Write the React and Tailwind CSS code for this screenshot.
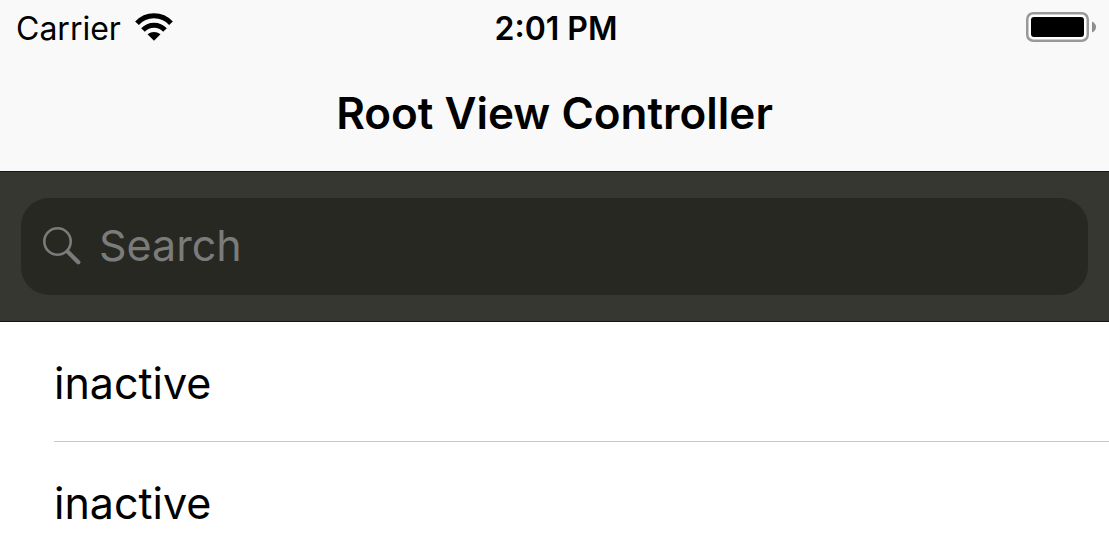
import { useState } from 'react';

const rows = [
    { id: 1, title: 'inactive' },
    { id: 2, title: 'inactive' },
];

function WifiIcon() {
    return (
        <svg className="w-[38px] h-7" viewBox="0 0 38 28" fill="none" stroke="black" strokeWidth="5" aria-hidden="true">
            <path d="M2 10.2A23 23 0 0 1 36 10.2" />
            <path d="M8 17A15 15 0 0 1 30 17" />
            <path d="M12.5 21.3Q19 16.5 25.5 21.3L19 27.7Z" fill="black" stroke="none" />
        </svg>
    );
}

function BatteryIcon() {
    return (
        <svg className="w-[70px] h-[30px]" viewBox="0 0 70 30" aria-hidden="true">
            <rect x="1.25" y="1.25" width="60.5" height="27.5" rx="6" fill="white" stroke="#999" strokeWidth="2.5" />
            <rect x="5" y="5" width="53" height="20" rx="3" fill="black" />
            <path d="M66 9.5Q70 11.5 70 15T66 20.5Z" fill="#8e8e8e" />
        </svg>
    );
}

function SearchIcon() {
    return (
        <svg className="w-[38px] h-[38px] shrink-0" viewBox="0 0 38 38" fill="none" stroke="#7b7b7b" aria-hidden="true">
            <circle cx="14.5" cy="14.5" r="13.2" strokeWidth="2.6" />
            <path d="M24.5 24.5L35.3 35.3" strokeWidth="4.2" strokeLinecap="round" />
        </svg>
    );
}

export default function App() {
    const [query, setQuery] = useState('');

    return (
        <div className="h-screen flex flex-col overflow-hidden bg-white text-black font-['Inter',sans-serif]">
            {/* Status bar + navigation bar */}
            <header className="shrink-0 bg-[#f9f9f9]">
                <div className="h-14 grid grid-cols-[1fr_auto_1fr] items-center pb-0.5 pl-4 pr-[13px] text-[32px] leading-none">
                    <div className="flex items-center gap-3.5">
                        <span className="pt-1">Carrier</span>
                        <WifiIcon />
                    </div>
                    <span className="pt-1 font-semibold">2:01 PM</span>
                    <div className="flex justify-end">
                        <BatteryIcon />
                    </div>
                </div>
                <div className="h-[115px] flex items-center justify-center pb-0.5">
                    <h1 className="text-[44px] leading-none font-semibold">Root View Controller</h1>
                </div>
            </header>

            {/* Search bar */}
            <div className="shrink-0 border-y border-[#161713] bg-[#363730] px-[21px] py-[26px]">
                <label className="h-[97px] flex items-center gap-[18px] rounded-[28px] bg-[#272822] px-[22px] pb-0.5">
                    <SearchIcon />
                    <input
                        type="text"
                        aria-label="Search"
                        placeholder="Search"
                        value={query}
                        onChange={(e) => setQuery(e.target.value)}
                        className="flex-1 min-w-0 bg-transparent text-[43px] text-white placeholder:text-[#7b7b7b] outline-none"
                    />
                </label>
            </div>

            <ul className="flex-1 min-h-0 overflow-hidden pl-[54px]">
                {rows.map((row) => (
                    <li key={row.id} className="h-30 flex items-center border-b border-[#c8c7cc] pt-1 text-[43px] leading-none">
                        {row.title}
                    </li>
                ))}
            </ul>
        </div>
    );
}
